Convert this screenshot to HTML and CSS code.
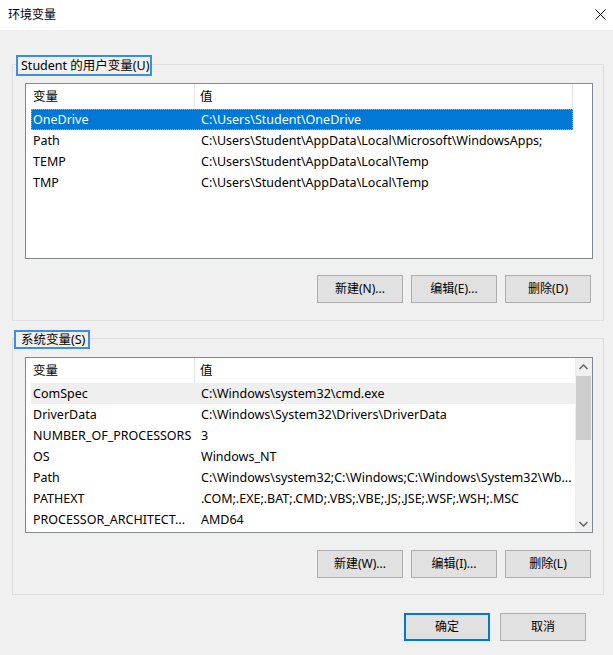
FILE: index.html
```html
<!DOCTYPE html>
<html lang="zh-CN">
<head>
<meta charset="utf-8">
<title>环境变量</title>
<link rel="stylesheet" href="styles.css">
</head>
<body>
<div class="window">
  <div class="titlebar">
    <span class="title">环境变量</span>
    <svg class="close" width="11" height="11" viewBox="0 0 11 11"><path d="M0.5 0.5 L10.5 10.5 M10.5 0.5 L0.5 10.5" stroke="#000" stroke-width="1" fill="none"/></svg>
  </div>
  <div class="content">
    <div class="group group-user">
      <div class="legend legend-user">Student 的用户变量(U)</div>
      <div class="list list-user">
        <div class="header">
          <div class="hcell c1">变量</div>
          <div class="hcell c2">值</div>
          <div class="hcell c3"></div>
        </div>
        <div class="row selected"><span class="c1">OneDrive</span><span class="c2">C:\Users\Student\OneDrive</span></div>
        <div class="row"><span class="c1">Path</span><span class="c2">C:\Users\Student\AppData\Local\Microsoft\WindowsApps;</span></div>
        <div class="row"><span class="c1">TEMP</span><span class="c2">C:\Users\Student\AppData\Local\Temp</span></div>
        <div class="row"><span class="c1">TMP</span><span class="c2">C:\Users\Student\AppData\Local\Temp</span></div>
      </div>
      <div class="buttons">
        <button class="btn">新建(N)...</button>
        <button class="btn">编辑(E)...</button>
        <button class="btn">删除(D)</button>
      </div>
    </div>

    <div class="group group-sys">
      <div class="legend legend-sys">系统变量(S)</div>
      <div class="list list-sys">
        <div class="list-body">
          <div class="header">
            <div class="hcell c1">变量</div>
            <div class="hcell c2">值</div>
          </div>
          <div class="row hover"><span class="c1">ComSpec</span><span class="c2">C:\Windows\system32\cmd.exe</span></div>
          <div class="row"><span class="c1">DriverData</span><span class="c2">C:\Windows\System32\Drivers\DriverData</span></div>
          <div class="row"><span class="c1">NUMBER_OF_PROCESSORS</span><span class="c2">3</span></div>
          <div class="row"><span class="c1">OS</span><span class="c2">Windows_NT</span></div>
          <div class="row"><span class="c1">Path</span><span class="c2">C:\Windows\system32;C:\Windows;C:\Windows\System32\Wb...</span></div>
          <div class="row"><span class="c1">PATHEXT</span><span class="c2">.COM;.EXE;.BAT;.CMD;.VBS;.VBE;.JS;.JSE;.WSF;.WSH;.MSC</span></div>
          <div class="row"><span class="c1">PROCESSOR_ARCHITECT...</span><span class="c2">AMD64</span></div>
        </div>
        <div class="scrollbar">
          <div class="arrow"><svg width="9" height="6" viewBox="0 0 9 6"><path d="M0.5 5 L4.5 1 L8.5 5" stroke="#606060" stroke-width="1.4" fill="none"/></svg></div>
          <div class="track"><div class="thumb"></div></div>
          <div class="arrow"><svg width="9" height="6" viewBox="0 0 9 6"><path d="M0.5 1 L4.5 5 L8.5 1" stroke="#606060" stroke-width="1.4" fill="none"/></svg></div>
        </div>
      </div>
      <div class="buttons">
        <button class="btn">新建(W)...</button>
        <button class="btn">编辑(I)...</button>
        <button class="btn">删除(L)</button>
      </div>
    </div>

    <div class="footer">
      <button class="btn btn-default">确定</button>
      <button class="btn">取消</button>
    </div>
    <div class="grip">
      <svg width="10" height="10" viewBox="0 0 10 10" fill="#bcbcbc">
        <rect x="8" y="0" width="2" height="2"/>
        <rect x="4" y="4" width="2" height="2"/><rect x="8" y="4" width="2" height="2"/>
        <rect x="0" y="8" width="2" height="2"/><rect x="4" y="8" width="2" height="2"/><rect x="8" y="8" width="2" height="2"/>
      </svg>
    </div>
  </div>
</div>
</body>
</html>
```

FILE: styles.css
```css
* { box-sizing: border-box; }
html, body { margin: 0; padding: 0; }
body {
  background: #f0f0f0;
  font-family: "Noto Sans", "Noto Sans CJK SC", sans-serif;
  font-size: 12.5px;
  color: #000;
}
.window { width: 613px; height: 655px; overflow: hidden; }
.titlebar {
  height: 30px;
  background: #fff;
  display: flex;
  align-items: center;
  justify-content: space-between;
  padding: 0 7px 1px 8px;
}
.title { font-size: 12px; line-height: 16px; }
.close { display: block; }

.content { position: relative; padding: 0 9px 0 12px; height: 625px; }

.group {
  border: 1px solid #dcdcdc;
  padding: 0 10px 17px 12px;
}
.group-user { margin-top: 34px; }
.group-sys { margin-top: 17px; padding-bottom: 16px; }
.group-sys .buttons { margin-top: 17px; }

.legend {
  width: fit-content;
  border: 2px solid #3c8fdf;
  background: #f0f0f0;
  white-space: nowrap;
}
.legend-user {
  margin: -10px 0 0 -9px;
  height: 21px;
  line-height: 17px;
  padding: 0 1px 0 3px;
}
.legend-sys {
  margin: -9px 0 0 -11px;
  height: 19px;
  line-height: 15px;
  padding: 0 3px 0 5px;
}

.list {
  background: #fff;
  border: 1px solid #828790;
  overflow: hidden;
}
.list-user { margin-top: 7px; height: 176px; }
.list-sys { margin-top: 8px; height: 176px; display: flex; }
.list-body { flex: 1; min-width: 0; }

.header {
  height: 25px;
  display: flex;
  align-items: stretch;
}
.hcell {
  line-height: 25px;
  padding-left: 6px;
}
.header .c1 { width: 169px; padding-left: 7px; border-right: 1px solid #e5e5e5; }
.header .c2 { flex: 1; padding-left: 5px; }
.list-user .header .c2 { flex: none; width: 378px; border-right: 1px solid #e5e5e5; }

.row {
  height: 21px;
  line-height: 22px;
  display: flex;
  margin-left: 5px;
  white-space: nowrap;
}
.list-user .row { width: 542px; }
.row .c1 { width: 170px; padding-left: 2px; }
.row .c2 { flex: 1; }
.row.selected {
  background: #0078d7;
  color: #fff;
  outline: 1px dotted #e8a040;
  outline-offset: -1px;
}
.row.hover { background: #efefef; }

.scrollbar {
  width: 17px;
  background: #f0f0f0;
  display: flex;
  flex-direction: column;
}
.arrow {
  height: 17px;
  display: flex;
  align-items: center;
  justify-content: center;
}
.track { flex: 1; }
.thumb { margin: 1px 1px 0; height: 64px; background: #cdcdcd; }

.buttons {
  display: flex;
  justify-content: flex-end;
  gap: 8px;
  margin-top: 16px;
  padding-right: 2px;
}
.btn {
  width: 86px;
  height: 28px;
  background: #e1e1e1;
  border: 1px solid #adadad;
  font-family: "Noto Sans", "Noto Sans CJK SC", sans-serif;
  font-size: 12px;
  color: #000;
  padding: 0;
  line-height: 24px;
}
.btn-default { border: 2px solid #0078d7; }

.footer {
  display: flex;
  justify-content: flex-end;
  gap: 10px;
  margin-top: 18px;
  padding-right: 18px;
}
.grip { position: absolute; right: 0; bottom: 0; line-height: 0; }
```
